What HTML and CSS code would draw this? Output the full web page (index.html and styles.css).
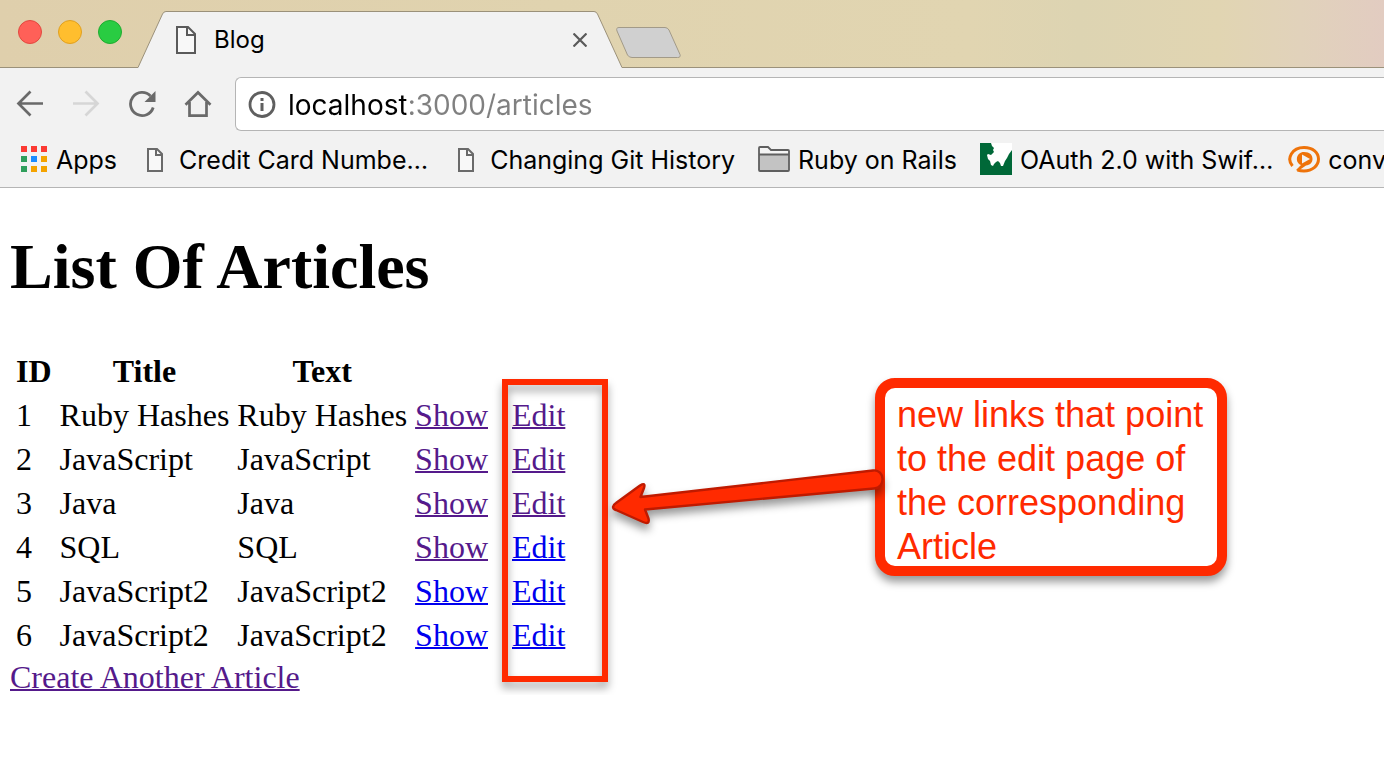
FILE: index.html
```html
<!DOCTYPE html>
<html lang="en">
<head>
<meta charset="utf-8">
<title>Blog</title>
<link rel="stylesheet" href="styles.css">
</head>
<body>
<header class="browser">
  <div class="tab-strip">
    <div class="window-buttons">
      <button class="light light-close" aria-label="Close window"></button>
      <button class="light light-minimize" aria-label="Minimize window"></button>
      <button class="light light-zoom" aria-label="Zoom window"></button>
    </div>
    <div class="tab">
      <svg class="tab-edge" width="28" height="57" viewBox="0 0 28 57" aria-hidden="true"><path d="M0 57V56.500L24.500 3Q25.700 .5 28 .5V57Z" fill="#f2f2f2"/><path d="M0 56.500L24.500 3Q25.700 .5 28 .5" fill="none" stroke="#9b917a"/></svg>
      <div class="tab-body">
        <svg width="20" height="28" viewBox="0 0 20 28" aria-hidden="true"><path d="M1 1H12L19 8V27H1Z" fill="#f8f8f8" stroke="#5a5a5a" stroke-width="2"/><path d="M11 1V9H19" fill="none" stroke="#5a5a5a" stroke-width="2"/></svg>
        <span class="tab-title">Blog</span>
        <button class="icon-button" aria-label="Close tab"><svg width="14" height="14" viewBox="0 0 14 14"><path d="M.5 .5L13.500 13.500M13.500 .5L.5 13.500" stroke="#5a5a5a" stroke-width="2.200"/></svg></button>
      </div>
      <svg class="tab-edge" width="28" height="57" viewBox="0 0 28 57" aria-hidden="true"><path d="M28 57V56.500L3.500 3Q2.300 .5 0 .5V57Z" fill="#f2f2f2"/><path d="M28 56.500L3.500 3Q2.300 .5 0 .5" fill="none" stroke="#9b917a"/></svg>
    </div>
    <button class="icon-button new-tab" aria-label="New tab"><svg width="66" height="32" viewBox="0 0 66 32"><path d="M3 .5H49Q51.500 .5 53 3L64 27.500Q65 30.500 61.500 30.500H16Q13 30.500 11.500 28L1 4Q-.2 .5 3 .5Z" fill="#d0d0d0" stroke="#a29a88"/></svg></button>
  </div>

  <div class="toolbar">
    <div class="nav-buttons">
      <button class="icon-button" aria-label="Back"><svg width="28" height="28" viewBox="0 0 28 28"><path d="M27 13.500H3M14.500 1.500L2.500 13.500L14.500 25.500" fill="none" stroke="#6a6a6a" stroke-width="2.700"/></svg></button>
      <button class="icon-button" aria-label="Forward" disabled><svg width="28" height="28" viewBox="0 0 28 28"><path d="M1 13.500H25M13.500 1.500L25.500 13.500L13.500 25.500" fill="none" stroke="#d6d6d6" stroke-width="2.700"/></svg></button>
      <button class="icon-button" aria-label="Reload"><svg width="28" height="28" viewBox="0 0 28 28"><path d="M22.500 6A11.600 11.600 0 1 0 25.200 17.500" fill="none" stroke="#6a6a6a" stroke-width="2.800"/><path d="M27.500 1V12H16.500Z" fill="#6a6a6a"/></svg></button>
      <button class="icon-button" aria-label="Home"><svg width="28" height="28" viewBox="0 0 28 28"><path d="M1.500 14.800L14 2.500L26.500 14.800M5.500 12V25.600H22.500V12" fill="none" stroke="#6a6a6a" stroke-width="2.700"/></svg></button>
    </div>
    <div class="address-bar">
      <svg width="28" height="28" viewBox="0 0 28 28" aria-hidden="true"><circle cx="14" cy="14.500" r="12" fill="none" stroke="#5f5f5f" stroke-width="2.800"/><path d="M12.500 8H15.500V11H12.500ZM12.500 13H15.500V21H12.500Z" fill="#5f5f5f"/></svg>
      <input class="address" type="text" value="localhost:3000/articles" aria-label="Address" spellcheck="false">
    </div>
  </div>

  <nav class="bookmarks" aria-label="Bookmarks">
    <a class="bookmark" href="#apps"><svg width="28" height="28" viewBox="0 0 28 28" aria-hidden="true"><path d="M1 0h6v6H1zM11 0h6v6h-6zM21 0h6v6h-6z" fill="#fb3a33"/><path d="M1 10h6v6H1zM1 20h6v6H1z" fill="#2f9e5b"/><path d="M11 10h6v6h-6z" fill="#1a8cff"/><path d="M21 10h6v6h-6zM11 20h6v6h-6zM21 20h6v6h-6z" fill="#f4a300"/></svg>Apps</a>
    <a class="bookmark bookmark-page" href="#cards"><svg width="16" height="24" viewBox="0 0 16 24" aria-hidden="true"><path d="M1 1H10L15 6V23H1Z" fill="#f8f8f8" stroke="#6a6a6a" stroke-width="2"/><path d="M9 1V7H15" fill="none" stroke="#6a6a6a" stroke-width="2"/></svg>Credit Card Numbe…</a>
    <a class="bookmark bookmark-page" href="#git"><svg width="16" height="24" viewBox="0 0 16 24" aria-hidden="true"><path d="M1 1H10L15 6V23H1Z" fill="#f8f8f8" stroke="#6a6a6a" stroke-width="2"/><path d="M9 1V7H15" fill="none" stroke="#6a6a6a" stroke-width="2"/></svg>Changing Git History</a>
    <a class="bookmark bookmark-wide" href="#rails"><svg width="32" height="28" viewBox="0 0 32 28" aria-hidden="true"><path d="M1 24V2Q1 1 2 1H10L13 4H30Q31 4 31 5V24Q31 25 30 25H2Q1 25 1 24Z" fill="#f4f4f4"/><path d="M1 8H31V25H1Z" fill="#c3c3c3"/><path d="M1 24V2Q1 1 2 1H10L13 4H30Q31 4 31 5V24Q31 25 30 25H2Q1 25 1 24ZM1 8.500H31" fill="none" stroke="#5f5f5f" stroke-width="1.800"/></svg>Ruby on Rails</a>
    <a class="bookmark bookmark-wide" href="#oauth"><svg width="32" height="34" viewBox="0 0 32 34" aria-hidden="true"><path d="M0 0H32V32H0Z" fill="#006838"/><path d="M11 0H32V7L29 11L27 15L25 18L23 23H21L20 20L18 18L16 19L14 21L13 23L11 22L10 18L8 16L7 12L8 11L11 12L14 9L13 7L14 5L12 3Z" fill="#fff"/></svg>OAuth 2.0 with Swif…</a>
    <a class="bookmark" href="#conv"><svg width="32" height="28" viewBox="0 0 32 28" aria-hidden="true"><path d="M4.500 20C-2 12.500 4 1.500 16 1.500C25 1.500 30.500 6.500 30.500 13C30.500 20 24 25 16 25C13 25 11 24.500 9.500 24" fill="none" stroke="#ee730a" stroke-width="3"/><path d="M16 6C22 6 24.500 9 24.500 13C24.500 16.500 22 19 18 19.500L10 25L8 24L13 19C6.500 16.500 8 6 16 6Z" fill="#ee730a"/><path d="M14 8.500L22 13L14 17.500Z" fill="#f2f2f2"/></svg>conv</a>
  </nav>
</header>

<main class="page">
  <h1 class="page-title">List Of Articles</h1>
  <table class="articles">
    <thead>
      <tr><th>ID</th><th>Title</th><th>Text</th></tr>
    </thead>
    <tbody>
      <tr><td>1</td><td>Ruby Hashes</td><td>Ruby Hashes</td><td><a class="visited" href="#show1">Show</a></td><td class="edit-cell"><a class="visited" href="#edit1">Edit</a></td></tr>
      <tr><td>2</td><td>JavaScript</td><td>JavaScript</td><td><a class="visited" href="#show2">Show</a></td><td class="edit-cell"><a class="visited" href="#edit2">Edit</a></td></tr>
      <tr><td>3</td><td>Java</td><td>Java</td><td><a class="visited" href="#show3">Show</a></td><td class="edit-cell"><a class="visited" href="#edit3">Edit</a></td></tr>
      <tr><td>4</td><td>SQL</td><td>SQL</td><td><a class="visited" href="#show4">Show</a></td><td class="edit-cell"><a class="unvisited" href="#edit4">Edit</a></td></tr>
      <tr><td>5</td><td>JavaScript2</td><td>JavaScript2</td><td><a class="unvisited" href="#show5">Show</a></td><td class="edit-cell"><a class="unvisited" href="#edit5">Edit</a></td></tr>
      <tr><td>6</td><td>JavaScript2</td><td>JavaScript2</td><td><a class="unvisited" href="#show6">Show</a></td><td class="edit-cell"><a class="unvisited" href="#edit6">Edit</a></td></tr>
    </tbody>
  </table>
  <a class="visited" href="#new">Create Another Article</a>

  <div class="highlight"></div>
  <p class="callout">new links that point<br>to the edit page of<br>the corresponding<br>Article</p>
  <svg class="arrow" width="290" height="80" viewBox="0 0 290 80" aria-hidden="true"><path d="M4 49Q4.500 46.500 7 45L31 27.500Q37 24 35 30L31.500 39L264 12.500C276 11 277 30 265 30.500L36 51.500L39.500 60.500Q41 67 34 64L7 52Q4 51 4 49Z" fill="#ff2a00" stroke="#bf1a00" stroke-width="2.400" stroke-linejoin="round"/></svg>
</main>
</body>
</html>
```
FILE: styles.css
```css
* {
  box-sizing: border-box;
}

body {
  margin: 0;
  background: #fff;
  color: #000;
  overflow-x: hidden;
}

button,
input {
  margin: 0;
  padding: 0;
  border: 0;
  background: none;
  font: inherit;
}

svg {
  display: block;
  flex: none;
}

/* Browser window */
.browser {
  background: #f2f2f2;
  font-family: Inter, "Liberation Sans", sans-serif;
  font-size: 24px;
}

.tab-strip {
  display: flex;
  align-items: flex-end;
  height: 68px;
  background:
    linear-gradient(#9b917a, #9b917a) bottom / 100% 1px no-repeat,
    linear-gradient(90deg, #dfcfac 0%, #e0d3af 40%, #e1d5b1 70%, #ddd4b2 78%, #e1d5b2 88%, #e1d2bb 94%, #e2ccc1 100%);
}

.window-buttons {
  display: flex;
  gap: 16px;
  align-self: flex-start;
  padding: 20px 16px 0 18px;
}

.light {
  width: 24px;
  height: 24px;
  border: 1px solid;
  border-radius: 50%;
}

.light-close {
  background: #ff6058;
  border-color: #e2483f;
}

.light-minimize {
  background: #ffbe2e;
  border-color: #e0a020;
}

.light-zoom {
  background: #29cc42;
  border-color: #1fac30;
}

.tab {
  display: flex;
  height: 57px;
}

.tab-body {
  display: flex;
  align-items: center;
  width: 428px;
  padding: 0 7px 1px 10px;
  border-top: 1px solid #9b917a;
  background: #f2f2f2;
}

.tab-title {
  flex: 1;
  margin-left: 18px;
}

.icon-button {
  display: block;
}

.new-tab {
  align-self: flex-start;
  margin: 27px 0 0 -6px;
}

.toolbar {
  display: flex;
  align-items: center;
  height: 64px;
  padding-top: 8px;
  padding-left: 16px;
}

.nav-buttons {
  display: flex;
  gap: 28px;
  margin-right: 23px;
}

.address-bar {
  display: flex;
  flex: 1;
  align-items: center;
  gap: 12px;
  height: 54px;
  padding-left: 12px;
  border: 1px solid #b5b5b5;
  border-right: 0;
  border-radius: 6px 0 0 6px;
  background: #fff;
}

.address {
  flex: 1;
  min-width: 0;
  padding-top: 2px;
  font-size: 28px;
  color: transparent;
  background: linear-gradient(90deg, #000 118px, #808080 118px);
  -webkit-background-clip: text;
  background-clip: text;
}

.bookmarks {
  display: flex;
  align-items: center;
  gap: 15px;
  height: 56px;
  padding-left: 20px;
  border-bottom: 1px solid #b5b5b5;
  font-size: 25px;
  overflow: hidden;
}

.bookmark {
  display: flex;
  flex: none;
  align-items: center;
  gap: 8px;
  color: #000;
  text-decoration: none;
  white-space: nowrap;
}

.bookmark-page {
  gap: 16px;
  padding-left: 15px;
}

.bookmark-wide {
  padding-left: 8px;
}

/* Articles page */
.page {
  position: relative;
  padding: 42px 10px 0;
  font-family: "Liberation Serif", serif;
  font-size: 32px;
  line-height: 36px;
}

.page-title {
  margin: 0 0 43px;
  font-size: 64px;
  line-height: 74px;
}

.articles {
  border-spacing: 4px;
}

.articles th,
.articles td {
  padding: 2px;
}

.articles .edit-cell {
  padding-left: 18px;
}

.visited,
.unvisited {
  text-decoration-thickness: 2px;
}

.visited {
  color: #551a8b;
}

.unvisited {
  color: #0000ee;
}

/* Annotations over the page */
.highlight {
  position: absolute;
  left: 502px;
  top: 191px;
  width: 106px;
  height: 303px;
  border: 6px solid #ff2a00;
  filter: drop-shadow(0 6px 4px rgba(0, 0, 0, 0.35));
  pointer-events: none;
}

.callout {
  position: absolute;
  left: 875px;
  top: 190px;
  height: 198px;
  margin: 0;
  padding: 5px 14px 0 12px;
  border: 10px solid #ff2a00;
  border-radius: 20px;
  background: #fff;
  box-shadow: 0 6px 8px rgba(0, 0, 0, 0.4);
  color: #ff2a00;
  font-family: "Liberation Sans", sans-serif;
  font-size: 36px;
  line-height: 44px;
  white-space: nowrap;
}

.arrow {
  position: absolute;
  left: 609px;
  top: 270px;
  filter: drop-shadow(0 6px 4px rgba(0, 0, 0, 0.4));
}
```
